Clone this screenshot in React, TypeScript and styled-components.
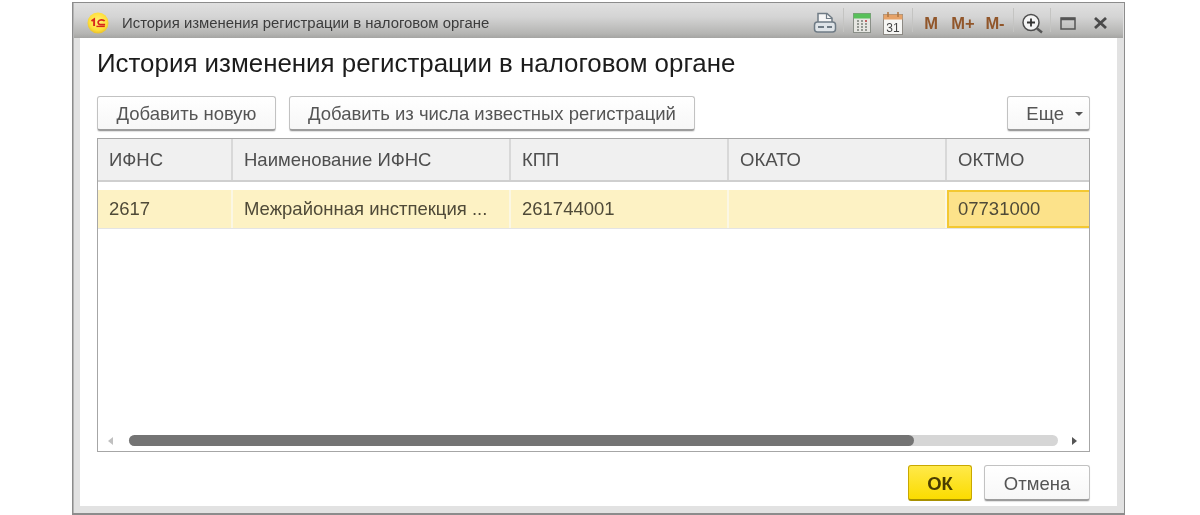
import styled, { createGlobalStyle } from 'styled-components';

const columns = [
  { title: 'ИФНС', value: '2617', width: 135 },
  { title: 'Наименование ИФНС', value: 'Межрайонная инстпекция ...', width: 278 },
  { title: 'КПП', value: '261744001', width: 218 },
  { title: 'ОКАТО', value: '', width: 218 },
  { title: 'ОКТМО', value: '07731000', width: 142 },
];

export default function App() {
  return (
    <>
      <GlobalStyle />
      <Window>
        <TitleBar>
          <LogoBadge>
            <svg width="26" height="26" viewBox="0 0 26 26" aria-hidden="true">
              <defs>
                <radialGradient id="logoFill" cx="50%" cy="42%" r="60%">
                  <stop offset="0%" stopColor="#fff27a" />
                  <stop offset="70%" stopColor="#ffdf3a" />
                  <stop offset="100%" stopColor="#e6bc2a" />
                </radialGradient>
              </defs>
              <circle cx="13" cy="13" r="10.5" fill="url(#logoFill)" />
              <path d="M6.5 11l2.6-1.7V16" fill="none" stroke="#d8261c" strokeWidth="1.9" />
              <path d="M19.6 11.2c-.9-1.6-5.6-1.9-6.4.6-.4 1.6.9 2.9 2.5 2.9h4.4" fill="none" stroke="#d8261c" strokeWidth="1.7" />
              <path d="M11.4 16.4h8.4" stroke="#d8261c" strokeWidth="1.4" />
            </svg>
          </LogoBadge>
          <WindowTitle>История изменения регистрации в налоговом органе</WindowTitle>
          <TitleTools>
            <ToolIcon $width={30}>
              <svg width="24" height="22" viewBox="0 0 24 22" aria-hidden="true">
                <path d="M5 10V1.500h9l5 4.500v4" fill="#f6f6f6" stroke="#6f7b85" strokeWidth="1.500" />
                <path d="M13.500 2v4.500H19" fill="none" stroke="#6f7b85" strokeWidth="1.200" />
                <rect x="1.500" y="10" width="21" height="10" rx="3" fill="#dfe4e8" stroke="#6f7b85" strokeWidth="1.500" />
                <path d="M5 15h6M14 15h5" stroke="#6f7b85" strokeWidth="2" />
              </svg>
            </ToolIcon>
            <ToolDivider />
            <ToolIcon $width={30}>
              <svg width="18" height="20" viewBox="0 0 18 20" aria-hidden="true">
                <rect x="0.500" y="0.500" width="17" height="19" fill="#e6e6e2" stroke="#8a8f88" />
                <rect x="0.500" y="0.500" width="17" height="5" fill="#58c05a" />
                <path d="M4 8h2M8 8h2M12 8h2M4 11h2M8 11h2M12 11h2M4 14h2M8 14h2M12 14h2M4 17h2M8 17h2M12 17h2" stroke="#7a7f78" strokeWidth="1.600" />
                <path d="M12 8h2" stroke="#d05050" strokeWidth="1.600" />
              </svg>
            </ToolIcon>
            <ToolIcon $width={32}>
              <svg width="20" height="23" viewBox="0 0 20 23" aria-hidden="true">
                <rect x="0.500" y="2.500" width="19" height="20" fill="#f6f6f4" stroke="#8d8a84" />
                <rect x="0.500" y="2.500" width="19" height="5" fill="#e6a268" />
                <path d="M5 0v5M15 0v5" stroke="#b0763f" strokeWidth="1.500" />
                <text x="10" y="20" textAnchor="middle" fontFamily="Liberation Sans" fontSize="12" fill="#444">31</text>
              </svg>
            </ToolIcon>
            <ToolDivider />
            <MemoryKey $width={30}>М</MemoryKey>
            <MemoryKey $width={34}>М+</MemoryKey>
            <MemoryKey $width={30}>М-</MemoryKey>
            <ToolDivider />
            <ToolIcon $width={30}>
              <svg width="22" height="21" viewBox="0 0 22 21" aria-hidden="true">
                <circle cx="10" cy="9.500" r="8" fill="#f4f4f4" stroke="#4d4d4d" strokeWidth="1.500" />
                <path d="M6 9.500h8M10 5.500v8" stroke="#333" strokeWidth="1.800" />
                <path d="M16 15.500l5 4" stroke="#555" strokeWidth="2.400" />
              </svg>
            </ToolIcon>
            <ToolDivider />
            <ToolIcon $width={28}>
              <svg width="16" height="13" viewBox="0 0 16 13" aria-hidden="true">
                <rect x="1" y="1" width="14" height="11" fill="none" stroke="#555" strokeWidth="1.500" />
                <path d="M1 2h14" stroke="#555" strokeWidth="2.500" />
              </svg>
            </ToolIcon>
            <ToolIcon $width={36}>
              <svg width="13" height="12" viewBox="0 0 13 12" aria-hidden="true">
                <path d="M1 1l11 10M12 1L1 11" stroke="#4a4a4a" strokeWidth="2.800" />
              </svg>
            </ToolIcon>
          </TitleTools>
        </TitleBar>

        <Content>
          <Heading>История изменения регистрации в налоговом органе</Heading>
          <CommandBar>
            <Button $width={179}>Добавить новую</Button>
            <Button $width={406}>Добавить из числа известных регистраций</Button>
            <MoreButton>
              Еще
              <Caret />
            </MoreButton>
          </CommandBar>

          <Table>
            <HeaderRow>
              {columns.map((column) => (
                <HeaderCell key={column.title} $width={column.width}>
                  {column.title}
                </HeaderCell>
              ))}
            </HeaderRow>
            <DataRow>
              {columns.map((column, index) => (
                <DataCell key={column.title} $width={column.width} $current={index === columns.length - 1}>
                  {column.value}
                </DataCell>
              ))}
            </DataRow>
            <ScrollBar>
              <ArrowLeft />
              <Track>
                <Thumb style={{ width: `${(785 / 929) * 100}%` }} />
              </Track>
              <ArrowRight />
            </ScrollBar>
          </Table>

          <Footer>
            <PrimaryButton>ОК</PrimaryButton>
            <CancelButton $width={106}>Отмена</CancelButton>
          </Footer>
        </Content>
      </Window>
    </>
  );
}

const GlobalStyle = createGlobalStyle`
  html, body {
    margin: 0;
    padding: 0;
    background: #ffffff;
  }

  body {
    font-family: "Liberation Sans", Arial, sans-serif;
    overflow: hidden;
  }
`;

const Window = styled.div`
  box-sizing: border-box;
  width: 1053px;
  height: 513px;
  margin: 2px 0 0 72px;
  display: flex;
  flex-direction: column;
  padding: 0 7px 7px 7px;
  border: 1px solid #8c8c8c;
  border-bottom-width: 2px;
  box-shadow: inset 1px 0 0 #b4b4b4;
  background: #e2e2e2;
  filter: blur(0.3px);
`;

const TitleBar = styled.header`
  flex: none;
  box-sizing: border-box;
  height: 35px;
  margin: 0 -6px 0 -6px;
  padding: 5px 5px 0 11px;
  display: flex;
  align-items: center;
  background: linear-gradient(180deg, #e0e0e0 0%, #d4d4d4 40%, #b4b4b2 88%, #a4a4a2 100%);
`;

const LogoBadge = styled.div`
  width: 26px;
  height: 26px;
  display: flex;
  flex: none;
`;

const WindowTitle = styled.div`
  margin-left: 11px;
  font-size: 14.9px;
  color: #3c3c3c;
  white-space: nowrap;
`;

const TitleTools = styled.div`
  margin-left: auto;
  display: flex;
  align-items: center;
`;

const ToolIcon = styled.span<{ $width: number }>`
  width: ${(p) => p.$width}px;
  display: flex;
  justify-content: center;
  align-items: center;
`;

const ToolDivider = styled.span`
  width: 1px;
  height: 24px;
  margin: -6px 3px 0;
  background: #c4c4c2;
`;

const MemoryKey = styled.span<{ $width: number }>`
  width: ${(p) => p.$width}px;
  text-align: center;
  font-size: 16.5px;
  font-weight: 700;
  color: #91562a;
  white-space: nowrap;
`;

const Content = styled.main`
  flex: 1;
  min-height: 0;
  display: flex;
  flex-direction: column;
  padding: 0 27px 5px 17px;
  background: #ffffff;
`;

const Heading = styled.h1`
  margin: 8px 0 0;
  font-size: 25.9px;
  line-height: 34px;
  font-weight: 400;
  color: #1c1c1c;
  white-space: nowrap;
`;

const CommandBar = styled.div`
  margin-top: 16px;
  display: flex;
  gap: 13px;
`;

const Button = styled.button<{ $width: number }>`
  box-sizing: border-box;
  width: ${(p) => p.$width}px;
  height: 35px;
  padding: 2px 0 0;
  border: 1px solid #c2c2c2;
  border-bottom: 2px solid #9c9c9c;
  border-radius: 3px;
  background: linear-gradient(180deg, #ffffff 0%, #f7f7f7 100%);
  box-shadow: 0 1px 1px rgba(0, 0, 0, 0.12);
  color: #555555;
  font: 18.5px "Liberation Sans", Arial, sans-serif;
  white-space: nowrap;
`;

const CancelButton = styled(Button)`
  height: 36px;
`;

const MoreButton = styled(Button).attrs({ $width: 83 })`
  margin-left: auto;
  display: flex;
  align-items: center;
  justify-content: flex-end;
  gap: 11px;
  padding-right: 6px;
`;

const Caret = styled.span`
  width: 0;
  height: 0;
  border-left: 4px solid transparent;
  border-right: 4px solid transparent;
  border-top: 4px solid #555555;
`;

const Table = styled.section`
  box-sizing: border-box;
  height: 315px;
  margin-top: 7px;
  display: flex;
  flex-direction: column;
  border: 1px solid #a6a6a6;
  overflow: hidden;
`;

const HeaderRow = styled.div`
  flex: none;
  box-sizing: border-box;
  height: 43px;
  display: flex;
  border-bottom: 2px solid #cfcfcf;
  background: #f0f0f0;
`;

const HeaderCell = styled.div<{ $width: number }>`
  box-sizing: border-box;
  flex: none;
  width: ${(p) => p.$width}px;
  padding-left: 11px;
  display: flex;
  align-items: center;
  border-right: 2px solid #d8d8d8;
  color: #4f4f4f;
  font-size: 18.5px;
  white-space: nowrap;

  &:last-child {
    border-right: 0;
  }
`;

const DataRow = styled.div`
  flex: none;
  box-sizing: border-box;
  height: 39px;
  margin-top: 8px;
  display: flex;
  border-bottom: 1px solid #e4e4e4;
  background: #fdf2c4;
`;

const DataCell = styled.div<{ $width: number; $current: boolean }>`
  box-sizing: border-box;
  flex: none;
  width: ${(p) => p.$width}px;
  padding-left: ${(p) => (p.$current ? 9 : 11)}px;
  display: flex;
  align-items: center;
  border-right: ${(p) => (p.$current ? '0' : '2px solid #fbf7e4')};
  ${(p) => p.$current && 'border: 2px solid #f3c832; border-right: 0; background: #fce28a;'}
  color: #4f4a38;
  font-size: 18.5px;
  white-space: nowrap;
`;

const ScrollBar = styled.div`
  margin-top: auto;
  margin-bottom: 5px;
  height: 11px;
  display: flex;
  align-items: center;
`;

const ArrowLeft = styled.span`
  width: 0;
  height: 0;
  margin: 0 16px 0 10px;
  border-top: 4px solid transparent;
  border-bottom: 4px solid transparent;
  border-right: 5px solid #c0c0c0;
`;

const ArrowRight = styled.span`
  width: 0;
  height: 0;
  margin-left: 14px;
  border-top: 4px solid transparent;
  border-bottom: 4px solid transparent;
  border-left: 5px solid #555555;
`;

const Track = styled.div`
  flex: none;
  width: 929px;
  height: 11px;
  border-radius: 6px;
  background: #d6d6d6;
`;

const Thumb = styled.div`
  height: 100%;
  border-radius: 6px;
  background: #747474;
`;

const Footer = styled.footer`
  margin-top: 13px;
  display: flex;
  justify-content: flex-end;
  gap: 12px;
`;

const PrimaryButton = styled.button`
  box-sizing: border-box;
  width: 64px;
  height: 36px;
  padding: 2px 0 0;
  border: 1px solid #c9a800;
  border-bottom: 2px solid #a89000;
  border-radius: 3px;
  background: linear-gradient(180deg, #ffe94a 0%, #fbdc00 100%);
  color: #4a3d00;
  font: 700 18.5px "Liberation Sans", Arial, sans-serif;
`;
